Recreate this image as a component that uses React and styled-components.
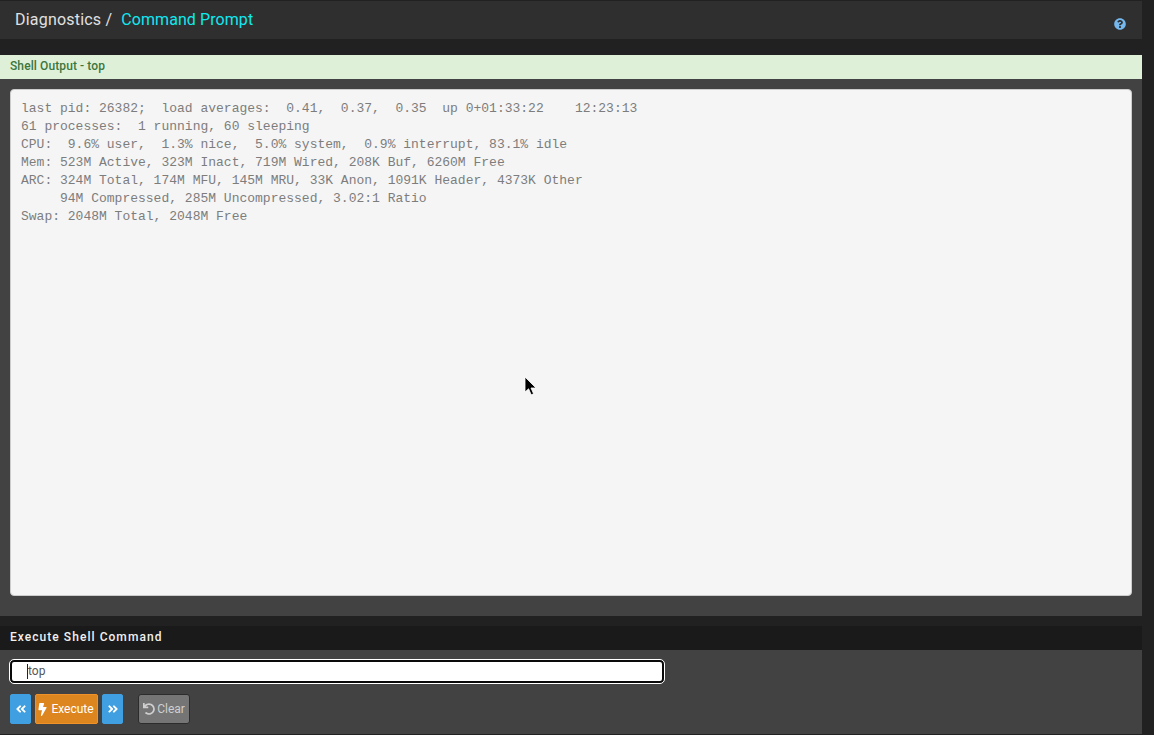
import React from "react";
import styled, { createGlobalStyle } from "styled-components";
import { FaAngleDoubleLeft, FaAngleDoubleRight, FaBolt, FaUndo, FaQuestionCircle } from "react-icons/fa";

const Global = createGlobalStyle`
  html, body {
    margin: 0;
    padding: 0;
    background: #212121;
    font-family: Roboto, "Liberation Sans", sans-serif;
    overflow: hidden;
  }
`;

const Page = styled.div`
  position: relative;
  width: 1154px;
  height: 735px;
  overflow: hidden;
`;

const Content = styled.div`
  width: 1142px;
  display: flex;
  flex-direction: column;
`;

const Header = styled.header`
  height: 38px;
  margin-top: 1px;
  background: #2f2f2f;
  display: flex;
  align-items: center;
  justify-content: space-between;
  padding: 0 16px 0 15px;
`;

const Crumbs = styled.h1`
  margin: 0 0 2px;
  font-size: 16px;
  font-weight: 400;
  color: #e0e0e0;
  display: flex;
  gap: 9px;
`;

const Parent = styled.span`
  letter-spacing: 0.2px;
`;

const Current = styled.span`
  color: #10e8f0;
  letter-spacing: 0.08px;
`;

const Help = styled(FaQuestionCircle)`
  width: 12px;
  height: 12px;
  margin-top: 7px;
  color: #75b8ee;
`;

const Alert = styled.div`
  margin-top: 16px;
  height: 24px;
  line-height: 22px;
  padding-left: 10px;
  background: #dff0d8;
  color: #3c763d;
  font-size: 12px;
  font-weight: 500;
  letter-spacing: 0.1px;
`;

const OutputBody = styled.div`
  background: #424242;
  padding: 10px 10px 20px;
`;

const Output = styled.pre`
  margin: 0;
  width: 1122px;
  height: 507px;
  box-sizing: border-box;
  padding: 10px;
  background: #f5f5f5;
  border: 1px solid #ccc;
  border-radius: 4px;
  font-family: "Liberation Mono", monospace;
  font-size: 13px;
  line-height: 18px;
  color: #7d7d7d;
`;

const PanelHeading = styled.h2`
  margin: 10px 0 0;
  height: 24px;
  line-height: 22px;
  padding-left: 10px;
  background: #1a1a1a;
  color: #f0f0f0;
  font-size: 12px;
  font-weight: 500;
  letter-spacing: 1.05px;
`;

const PanelBody = styled.div`
  background: #424242;
  height: 84px;
  padding: 10px 10px 0;
  box-sizing: border-box;
  display: flex;
  flex-direction: column;
  gap: 11px;
`;

const InputWrap = styled.div`
  position: relative;
  width: 654px;
  height: 23px;
`;

const CommandInput = styled.input`
  display: block;
  width: 100%;
  height: 100%;
  box-sizing: border-box;
  padding: 0 0 2px 16px;
  background: #fff;
  border: 2px solid #0a0a0a;
  outline: 1px solid #fff;
  outline-offset: 0;
  border-radius: 4px;
  font-family: Roboto, sans-serif;
  font-size: 12px;
  color: #555;
`;

const Caret = styled.span`
  position: absolute;
  left: 17px;
  top: 4px;
  width: 1px;
  height: 15px;
  background: #222;
`;

const Actions = styled.div`
  display: flex;
  align-items: center;
  height: 30px;
`;

const Button = styled.button`
  width: ${(p) => p.w}px;
  height: 30px;
  box-sizing: border-box;
  padding: 0 ${(p) => p.shift || 0}px 0 0;
  margin-right: ${(p) => p.mr || 0}px;
  background: ${(p) => p.bg};
  border: 1px solid ${(p) => p.line};
  border-radius: ${(p) => p.radius || 2}px;
  color: ${(p) => p.fg || "#fff"};
  font-family: Roboto, sans-serif;
  font-size: 12px;
  display: flex;
  align-items: center;
  justify-content: center;
  gap: 2px;
  svg {
    flex: none;
  }
`;

const Pointer = styled.svg`
  position: absolute;
  left: 524px;
  top: 376px;
`;

const OUTPUT = `last pid: 26382;  load averages:  0.41,  0.37,  0.35  up 0+01:33:22    12:23:13
61 processes:  1 running, 60 sleeping
CPU:  9.6% user,  1.3% nice,  5.0% system,  0.9% interrupt, 83.1% idle
Mem: 523M Active, 323M Inact, 719M Wired, 208K Buf, 6260M Free
ARC: 324M Total, 174M MFU, 145M MRU, 33K Anon, 1091K Header, 4373K Other
     94M Compressed, 285M Uncompressed, 3.02:1 Ratio
Swap: 2048M Total, 2048M Free`;

export default function App() {
  return (
    <Page>
      <Global />
      <Content>
        <Header>
          <Crumbs>
            <Parent>Diagnostics /</Parent>
            <Current>Command Prompt</Current>
          </Crumbs>
          <Help />
        </Header>
        <Alert>Shell Output - top</Alert>
        <OutputBody>
          <Output>{OUTPUT}</Output>
        </OutputBody>
        <PanelHeading>Execute Shell Command</PanelHeading>
        <PanelBody>
          <InputWrap>
            <CommandInput defaultValue="top" />
            <Caret />
          </InputWrap>
          <Actions>
            <Button w={21} bg="#3f9fe0" line="#3f9fe0" mr={4}>
              <FaAngleDoubleLeft size={12} />
            </Button>
            <Button w={63} bg="#dd8620" line="#f0922a" mr={4} shift={3}>
              <FaBolt size={13} />
              Execute
            </Button>
            <Button w={21} bg="#3f9fe0" line="#3f9fe0" mr={15}>
              <FaAngleDoubleRight size={12} />
            </Button>
            <Button w={52} bg="#757575" line="#2c2c2c" fg="#cfcfcf" radius={3}>
              <FaUndo size={12} />
              Clear
            </Button>
          </Actions>
        </PanelBody>
      </Content>
      <Pointer width="13" height="21" viewBox="0 0 13 21">
        <path d="M1 1v15l3.6-3.2 2.6 6 2.4-1-2.6-5.8H12z" fill="#000" stroke="#fff" strokeWidth="0.8" />
      </Pointer>
    </Page>
  );
}
